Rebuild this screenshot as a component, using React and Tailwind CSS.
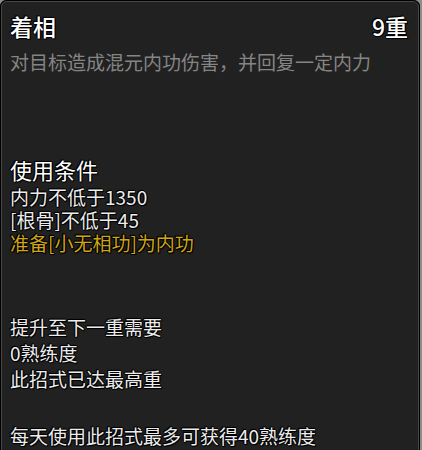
export default function App() {
  const font = { fontFamily: '"Noto Sans CJK SC", "Noto Sans", sans-serif' };
  // dark outline round the game text
  const outline =
    "[text-shadow:1px_0_0_#000,-1px_0_0_#000,0_1px_0_#000,0_-1px_0_#000,1px_1px_1px_#000,-1px_-1px_1px_#000]";

  return (
    <div className="w-[422px] h-[450px] bg-[#8c8c8c] overflow-hidden" style={font}>
      <div className="w-[420px] h-[456px] rounded-md border border-black bg-black">
        <div className="h-full rounded-md border border-[#464646] bg-[#212121] px-[8px] pt-[9px]">
          <div className={`flex justify-between items-center text-[23px] leading-[30px] font-medium text-white ${outline}`}>
            <span>着相</span>
            <span className="mr-[2px]">9重</span>
          </div>
          <div className="mt-[10px] text-[19px] leading-[22px] text-[#858585]">
            对目标造成混元内功伤害，并回复一定内力
          </div>

          <div className={`mt-[82px] text-[22px] leading-[28px] text-white ${outline}`}>使用条件</div>
          <div className={`mt-[2px] text-[19px] leading-[23px] ${outline}`}>
            <div className="text-[#ececec]">内力不低于1350</div>
            <div className="text-[#ececec]">[根骨]不低于45</div>
            <div className="text-[#d0a416]">准备[小无相功]为内功</div>
          </div>

          <div className={`mt-[60px] text-[19px] leading-[26px] text-[#ececec] ${outline}`}>
            <div>提升至下一重需要</div>
            <div>0熟练度</div>
            <div>此招式已达最高重</div>
            <div className="mt-[31px]">每天使用此招式最多可获得40熟练度</div>
          </div>
        </div>
      </div>
    </div>
  );
}
